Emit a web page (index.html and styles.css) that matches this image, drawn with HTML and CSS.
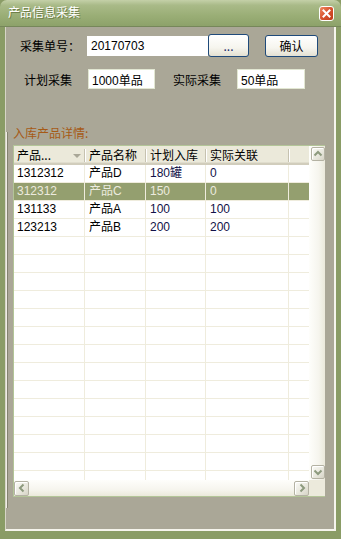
FILE: index.html
```html
<!DOCTYPE html>
<html lang="zh-CN">
<head>
    <meta charset="UTF-8">
    <title>产品信息采集</title>
    <link rel="stylesheet" href="styles.css">
</head>
<body>
    <div class="window">
        <div class="titlebar">
            <span class="title">产品信息采集</span>
            <span class="close-btn">
                <svg width="13" height="13" viewBox="0 0 13 13">
                    <path d="M3.5 3.5 L9.5 9.5 M9.5 3.5 L3.5 9.5" stroke="#fff" stroke-width="2" stroke-linecap="square"/>
                </svg>
            </span>
        </div>
        <div class="client">
            <div class="form-row row-top">
                <label class="lbl lbl-order">采集单号：</label>
                <input class="txt txt-order" type="text" value="20170703">
                <button class="btn btn-more" type="button">...</button>
                <button class="btn btn-ok" type="button">确认</button>
            </div>
            <div class="form-row row-plan">
                <label class="lbl lbl-plan">计划采集</label>
                <input class="txt txt-plan" type="text" value="1000单品">
                <label class="lbl lbl-real">实际采集</label>
                <input class="txt txt-real" type="text" value="50单品">
            </div>
            <div class="group">
                <div class="legend">入库产品详情:</div>
                <div class="listview">
                    <div class="grid-area">
                        <div class="lv-header">
                            <div class="hcell">产品...<span class="sort-arrow"></span></div>
                            <div class="hcell">产品名称</div>
                            <div class="hcell">计划入库</div>
                            <div class="hcell">实际关联</div>
                            <div class="hcell hcell-fill"></div>
                        </div>
                        <div class="lv-body" id="lvBody"></div>
                    </div>
                    <div class="vscroll">
                        <span class="sb-btn">
                            <svg width="14" height="14" viewBox="0 0 14 14"><path d="M3.5 8.5 L7 5 L10.5 8.5" fill="none" stroke="#8d9a7e" stroke-width="2"/></svg>
                        </span>
                        <span class="sb-btn">
                            <svg width="14" height="14" viewBox="0 0 14 14"><path d="M3.5 5.5 L7 9 L10.5 5.5" fill="none" stroke="#8d9a7e" stroke-width="2"/></svg>
                        </span>
                    </div>
                    <div class="hscroll">
                        <span class="sb-btn">
                            <svg width="14" height="14" viewBox="0 0 14 14"><path d="M8.5 3.5 L5 7 L8.5 10.5" fill="none" stroke="#8d9a7e" stroke-width="2"/></svg>
                        </span>
                        <span class="sb-btn">
                            <svg width="14" height="14" viewBox="0 0 14 14"><path d="M5.5 3.5 L9 7 L5.5 10.5" fill="none" stroke="#8d9a7e" stroke-width="2"/></svg>
                        </span>
                    </div>
                    <div class="sb-corner"></div>
                </div>
            </div>
        </div>
    </div>

    <script>
        var rows = [
            ['1312312', '产品D', '180罐', '0'],
            ['312312', '产品C', '150', '0'],
            ['131133', '产品A', '100', '100'],
            ['123213', '产品B', '200', '200']
        ];
        var selected = 1;
        var body = document.getElementById('lvBody');
        for (var i = 0; i < 18; i++) {
            var r = rows[i] || ['', '', '', ''];
            var row = document.createElement('div');
            row.className = 'lv-row' + (i === selected ? ' selected' : '');
            for (var c = 0; c < 5; c++) {
                var cell = document.createElement('div');
                cell.className = 'cell cell-' + (c + 1);
                cell.textContent = r[c] || '';
                row.appendChild(cell);
            }
            body.appendChild(row);
        }
    </script>
</body>
</html>
```

FILE: styles.css
```css
body {
    margin: 0;
    padding: 0;
    background-color: #8a9c66;
    font-family: 'Liberation Sans', 'Noto Sans CJK SC', sans-serif;
    font-size: 12px;
    color: #000;
}

.window {
    width: 341px;
    height: 539px;
    background-color: #8a9c66;
    border-radius: 7px 7px 0 0;
    display: flex;
    flex-direction: column;
    overflow: hidden;
}

.titlebar {
    height: 26px;
    border-bottom: 1px solid #76875a;
    background: linear-gradient(#c4d0a8 0%, #a9ba88 20%, #9aae76 60%, #8da26a 100%);
    display: flex;
    align-items: center;
    padding: 0 7px 0 8px;
}

.title {
    color: #fff;
    font-size: 12px;
    text-shadow: 1px 1px 0 #6f8049;
    line-height: 16px;
}

.close-btn {
    margin-left: auto;
    width: 13px;
    height: 13px;
    border: 1px solid #fff;
    border-radius: 3px;
    background: linear-gradient(135deg, #ef8a62 0%, #d8512d 50%, #bf3a18 100%);
    display: flex;
    margin-top: 1px;
}

.client {
    flex: 1;
    margin: 0 5px 8px 5px;
    background-color: #aaa797;
    border-left: 1px solid #d7d5c7;
    border-right: 2px solid #f5f4ec;
    border-bottom: 2px solid #f5f4ec;
    display: flex;
    flex-direction: column;
}

.form-row {
    display: flex;
    align-items: center;
}

.row-top {
    margin-top: 7px;
    height: 23px;
    padding-left: 14px;
}

.row-plan {
    margin-top: 12px;
    height: 20px;
    padding-left: 18px;
}

.lbl {
    font-family: 'Noto Sans CJK SC', sans-serif;
    font-size: 12px;
    color: #000;
}

.lbl-order {
    width: 67px;
}

.lbl-plan {
    width: 64px;
}

.lbl-real {
    width: 64px;
    margin-left: 18px;
}

.txt {
    height: 20px;
    box-sizing: border-box;
    border: 1px solid #e2e7d2;
    background-color: #fff;
    font-family: 'Liberation Sans', 'Noto Sans CJK SC', sans-serif;
    font-size: 12px;
    color: #000;
    padding: 0 3px;
    outline: none;
}

.txt-order {
    width: 121px;
    border-color: #fff;
}

.txt-plan {
    width: 67px;
}

.txt-real {
    width: 68px;
}

.btn {
    height: 23px;
    box-sizing: border-box;
    border: 1px solid #1f4a7a;
    border-radius: 3px;
    background: linear-gradient(#ffffff 0%, #f6f5ee 60%, #e4e1d2 100%);
    font-family: 'Noto Sans CJK SC', sans-serif;
    font-size: 12px;
    padding: 0;
    color: #000;
}

.btn-more {
    width: 41px;
    color: #1a2a6a;
}

.btn-ok {
    width: 53px;
    margin-left: 16px;
    height: 22px;
}

.group {
    margin-top: 43px;
    height: 376px;
    border-left: 1px solid #83816f;
    box-shadow: -1px 0 0 #eeede4;
    padding-left: 5px;
    margin-left: 1px;
}

.legend {
    margin-top: -7px;
    line-height: 16px;
    height: 16px;
    padding-left: 0;
    color: #a65a16;
    font-family: 'Noto Sans CJK SC', sans-serif;
}

.listview {
    margin-top: 4px;
    width: 312px;
    height: 352px;
    box-sizing: border-box;
    border: 1px solid #b3c598;
    display: grid;
    grid-template-columns: 295px 16px;
    grid-template-rows: 334px 16px;
    background-color: #fff;
}

.grid-area {
    overflow: hidden;
}

.lv-header {
    display: grid;
    grid-template-columns: 71px 61px 60px 83px 20px;
    height: 17px;
    background-color: #ebe9da;
    border-bottom: 2px solid #d1cdbc;
    box-shadow: inset 0 -1px 0 #e0ddcd;
}

.hcell {
    position: relative;
    padding-left: 4px;
    line-height: 18px;
    font-family: 'Noto Sans CJK SC', sans-serif;
    white-space: nowrap;
}

.hcell:first-child {
    padding-left: 3px;
}

.hcell::after {
    content: '';
    position: absolute;
    right: 0;
    top: 3px;
    bottom: 2px;
    width: 1px;
    background-color: #c6c2b0;
    box-shadow: 1px 0 0 #fff;
}

.hcell-fill::after {
    display: none;
}

.sort-arrow {
    position: absolute;
    left: 59px;
    top: 8px;
    width: 0;
    height: 0;
    border-left: 4px solid transparent;
    border-right: 4px solid transparent;
    border-top: 4px solid #a9a797;
}

.lv-row {
    display: grid;
    grid-template-columns: 71px 61px 60px 83px 20px;
    height: 18px;
}

.cell {
    box-sizing: border-box;
    border-right: 1px solid #efecdd;
    border-bottom: 1px solid #efecdd;
    padding-left: 4px;
    line-height: 17px;
    white-space: nowrap;
    overflow: hidden;
}

.cell-1 {
    padding-left: 3px;
}

.cell-3,
.cell-4 {
    color: #121248;
}

.cell-5 {
    border-right: none;
}

.lv-row.selected .cell {
    background-color: #949f6f;
    color: #ecebdf;
}

.vscroll {
    background: linear-gradient(90deg, #fefefb 0%, #f6f5ee 60%, #ebe9db 100%);
    display: flex;
    flex-direction: column;
    justify-content: space-between;
    align-items: center;
    padding: 1px 0 1px 1px;
}

.hscroll {
    background: linear-gradient(#fefefb 0%, #f6f5ee 60%, #ebe9db 100%);
    display: flex;
    justify-content: space-between;
    align-items: center;
    padding: 0 0 0 0;
}

.sb-btn {
    width: 14px;
    height: 14px;
    box-sizing: border-box;
    border: 1px solid #b4b2a3;
    border-radius: 2px;
    background: linear-gradient(135deg, #fbfbf7 0%, #e9e8de 55%, #d6d4c6 100%);
    box-shadow: inset 1px 1px 0 #fff;
    display: flex;
    align-items: center;
    justify-content: center;
}

.sb-btn svg {
    flex: none;
    margin: -1px;
}

.hscroll .sb-btn {
    width: 15px;
    height: 15px;
}

.sb-corner {
    background-color: #eceadc;
}
```
